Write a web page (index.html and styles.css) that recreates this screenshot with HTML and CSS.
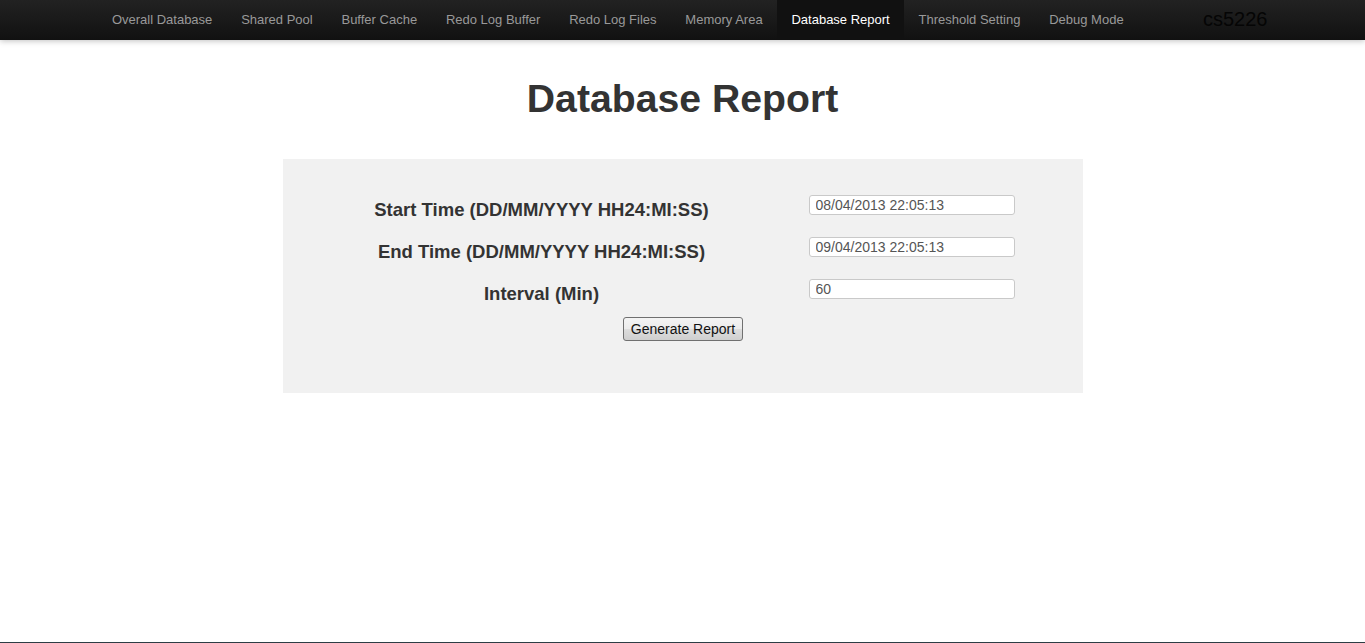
FILE: index.html
```html
<!DOCTYPE html>
<html>
<head>
<meta charset="utf-8">
<title>Database Report</title>
<link rel="stylesheet" href="styles.css">
</head>
<body>
<div class="navbar">
  <div class="container nav-inner">
    <ul class="nav">
      <li><a href="#">Overall Database</a></li>
      <li><a href="#">Shared Pool</a></li>
      <li><a href="#">Buffer Cache</a></li>
      <li><a href="#">Redo Log Buffer</a></li>
      <li><a href="#">Redo Log Files</a></li>
      <li><a href="#">Memory Area</a></li>
      <li class="active"><a href="#">Database Report</a></li>
      <li><a href="#">Threshold Setting</a></li>
      <li><a href="#">Debug Mode</a></li>
    </ul>
    <a class="brand" href="#">cs5226</a>
  </div>
</div>

<main class="page">
  <h1 class="title">Database Report</h1>
  <form class="report-box">
    <div class="fields">
      <label class="field-label">Start Time (DD/MM/YYYY HH24:MI:SS)</label>
      <div class="field-input"><input type="text" value="08/04/2013 22:05:13"></div>
      <label class="field-label">End Time (DD/MM/YYYY HH24:MI:SS)</label>
      <div class="field-input"><input type="text" value="09/04/2013 22:05:13"></div>
      <label class="field-label">Interval (Min)</label>
      <div class="field-input"><input type="text" value="60"></div>
    </div>
    <div class="actions">
      <button type="button" class="btn">Generate Report</button>
    </div>
  </form>
</main>
<div class="bottom-edge"></div>
</body>
</html>
```

FILE: styles.css
```css
html, body {
  margin: 0;
  padding: 0;
  background: #fff;
  font-family: "Liberation Sans", Arial, sans-serif;
  color: #333;
}

.navbar {
  height: 40px;
  background: linear-gradient(to bottom, #222222, #111111);
  box-shadow: 0 1px 6px rgba(0, 0, 0, 0.25);
}

.container {
  width: 1170px;
  margin: 0 auto;
}

.nav-inner {
  display: flex;
  align-items: stretch;
  height: 40px;
}

.nav {
  display: flex;
  list-style: none;
  margin: 0;
  padding: 0;
}

.nav li a {
  display: block;
  padding: 0 14.4px;
  line-height: 39px;
  font-size: 13px;
  color: #999;
  text-decoration: none;
}

.nav li.active a {
  background: #111;
  color: #fff;
}

.brand {
  margin-left: auto;
  font-size: 20px;
  line-height: 38px;
  color: #050505;
  text-decoration: none;
}

.page {
  display: flex;
  flex-direction: column;
  align-items: center;
}

.title {
  margin: 39px 0 0;
  font-size: 39.2px;
  line-height: 40px;
  font-weight: bold;
  color: #333;
}

.report-box {
  width: 800px;
  margin-top: 40px;
  background: #f1f1f1;
  padding: 36px 0 52px;
  box-sizing: border-box;
}

.fields {
  display: grid;
  grid-template-columns: 518px 1fr;
  column-gap: 8px;
  row-gap: 17px;
}

.field-label {
  text-align: center;
  font-size: 18.5px;
  font-weight: bold;
  line-height: 20px;
  padding-top: 5px;
  color: #333;
}

.field-input input {
  width: 206px;
  height: 20px;
  box-sizing: border-box;
  border: 1px solid #c9c9c9;
  border-radius: 3px;
  background: #fff;
  padding: 0 6px;
  font-family: "Liberation Sans", Arial, sans-serif;
  font-size: 14px;
  color: #555;
  margin: 0;
}

.actions {
  display: flex;
  justify-content: center;
  margin-top: 13px;
}

.btn {
  height: 24px;
  padding: 0 7px;
  margin-left: 1px;
  font-family: "Liberation Sans", Arial, sans-serif;
  font-size: 14px;
  color: #111;
  border: 1px solid #707070;
  border-radius: 3px;
  background: linear-gradient(to bottom, #f4f4f4 0%, #ebebeb 50%, #dddddd 51%, #cfcfcf 100%);
}

.bottom-edge {
  position: fixed;
  left: 0;
  right: 0;
  bottom: 0;
  height: 1px;
  background: #2d3d44;
}
```
